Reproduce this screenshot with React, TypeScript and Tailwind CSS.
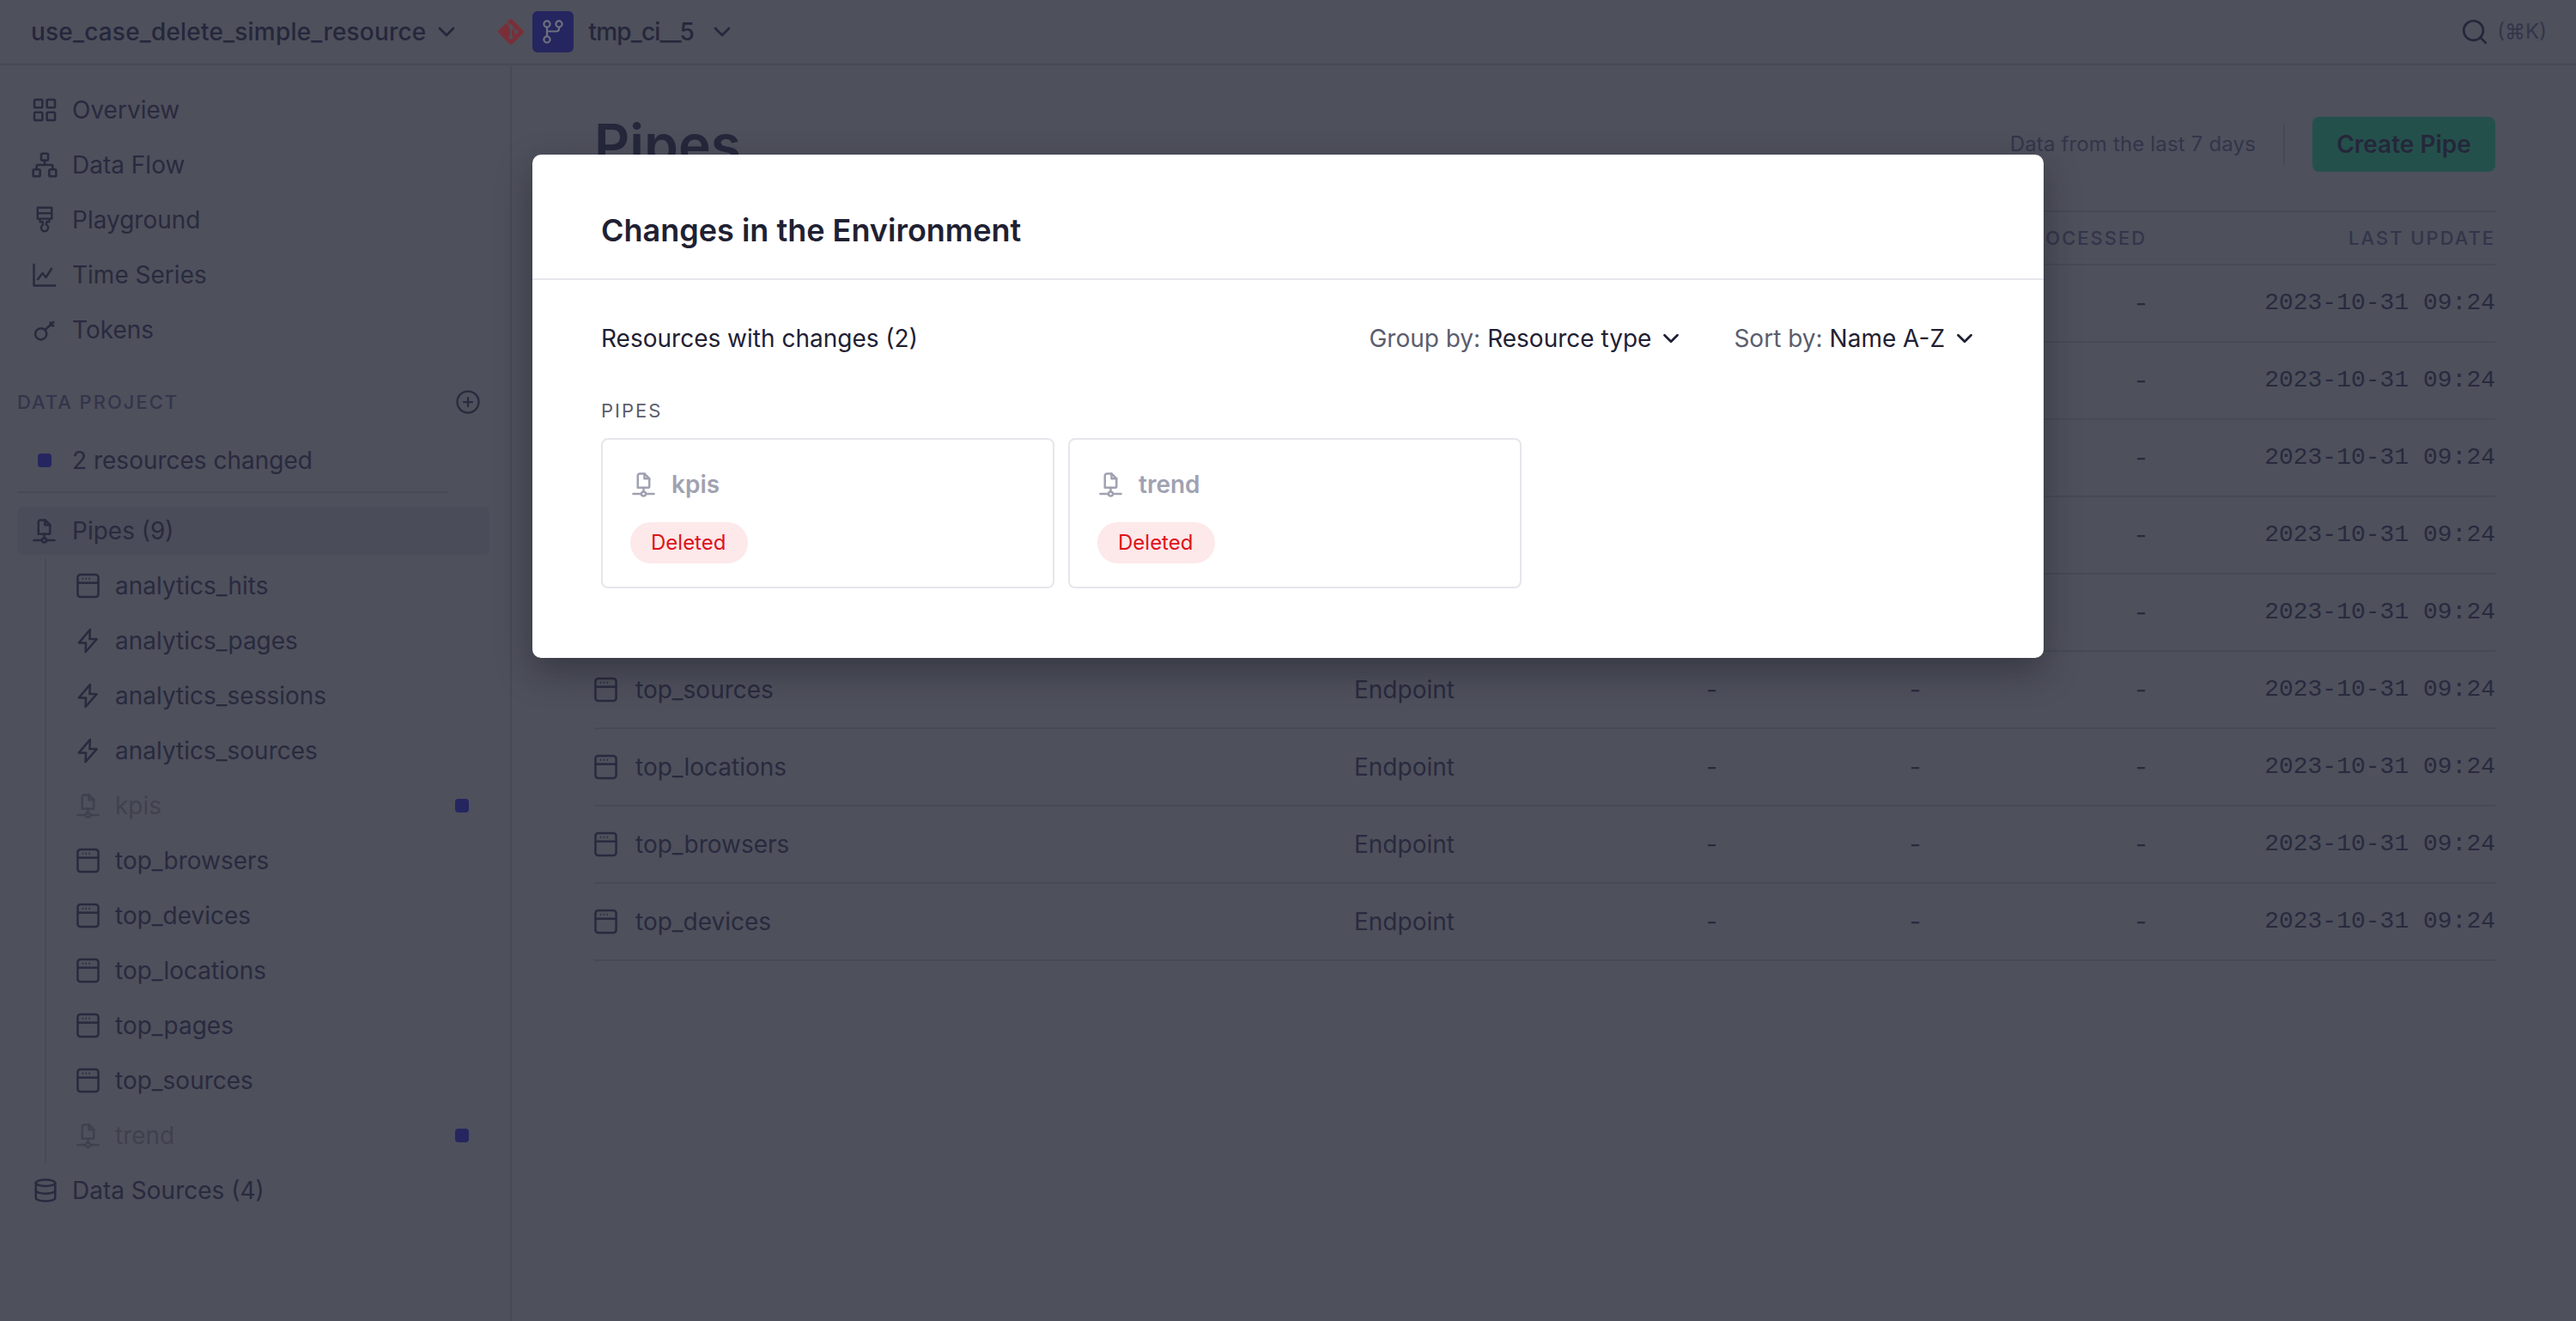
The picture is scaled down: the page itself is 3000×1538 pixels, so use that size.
import React from 'react';
import { ChevronDown, CirclePlus, Database, LayoutGrid, Network, Search } from 'lucide-react';
import { SiGit } from 'react-icons/si';

type IconProps = { className?: string };

function PipeIcon({ className = '' }: IconProps) {
  return (
    <svg viewBox="0 0 28 30" fill="none" stroke="currentColor" strokeWidth="2.6" strokeLinejoin="round" strokeLinecap="round" className={className}>
      <path d="M7 19V4.5A2.5 2.5 0 0 1 9.5 2H15l6 6v9a2 2 0 0 1-2 2H7z" />
      <path d="M15 2v6h6" />
      <path d="M14 19v5" />
      <path d="M1.5 26.5H10.8M17.2 26.5H26.5" />
      <circle cx="14" cy="26.5" r="2.6" />
    </svg>
  );
}

function NodeIcon({ className = '' }: IconProps) {
  return (
    <svg viewBox="0 0 28 30" fill="none" stroke="currentColor" strokeWidth="2.6" className={className}>
      <rect x="1.5" y="1.5" width="25" height="27" rx="3.5" />
      <path d="M1.5 11.5h25" />
      <path d="M7 6.5h1.4M11 6.5h1.4M15 6.5h1.4" strokeWidth="2" />
    </svg>
  );
}

function BoltIcon({ className = '' }: IconProps) {
  return (
    <svg viewBox="0 0 28 30" fill="none" stroke="currentColor" strokeWidth="2.6" strokeLinejoin="round" className={className}>
      <path d="M16.5 1.5 3 17.5h8.5l-.5 11 13.5-15.5H16z" />
    </svg>
  );
}

function BrushIcon({ className = '' }: IconProps) {
  return (
    <svg viewBox="0 0 24 34" fill="none" stroke="currentColor" strokeWidth="2.6" strokeLinejoin="round" className={className}>
      <path d="M3 1.5h18v14H3z" />
      <path d="M3 8.5h18" />
      <path d="M6 15.5v4h3.5l.5 3.5a4.5 4.5 0 1 0 4 0l.5-3.5H18v-4" />
    </svg>
  );
}

function ChartIcon({ className = '' }: IconProps) {
  return (
    <svg viewBox="0 0 28 28" fill="none" stroke="currentColor" strokeWidth="2.4" strokeLinejoin="round" className={className}>
      <path d="M1.5 1v25.5H27" />
      <path d="M5.5 20l6-8 4 5 7-11" />
    </svg>
  );
}

function KeyIcon({ className = '' }: IconProps) {
  return (
    <svg viewBox="0 0 28 28" fill="none" stroke="currentColor" strokeWidth="2.6" strokeLinejoin="round" className={className}>
      <circle cx="9" cy="18.5" r="6.8" />
      <path d="M14 13.5 25 3.5" />
      <path d="M20 8l1-4.5M20 8l5 .5" />
    </svg>
  );
}

function BranchIcon({ className = '' }: IconProps) {
  return (
    <svg viewBox="0 0 28 28" fill="none" stroke="currentColor" strokeWidth="2.2" className={className}>
      <circle cx="7" cy="5" r="3.6" />
      <circle cx="21" cy="5" r="3.6" />
      <circle cx="7" cy="23" r="3.6" />
      <path d="M7 8.6v10.8" />
      <path d="M21 8.6v1.9a3 3 0 0 1-3 3H7" />
    </svg>
  );
}

const mainNav = [
  { label: 'Overview', icon: <LayoutGrid className="w-[32px] h-[32px] -ml-[2px]" strokeWidth={1.9} /> },
  { label: 'Data Flow', icon: <Network className="w-[32px] h-[32px] -ml-[2px]" strokeWidth={1.9} /> },
  { label: 'Playground', icon: <BrushIcon className="w-[22px] h-[32px] ml-[3px]" /> },
  { label: 'Time Series', icon: <ChartIcon className="w-[28px] h-[28px]" /> },
  { label: 'Tokens', icon: <KeyIcon className="w-[27px] h-[27px] ml-[1px]" /> },
];

const pipes = [
  { name: 'analytics_hits', kind: 'node' },
  { name: 'analytics_pages', kind: 'bolt' },
  { name: 'analytics_sessions', kind: 'bolt' },
  { name: 'analytics_sources', kind: 'bolt' },
  { name: 'kpis', kind: 'deleted' },
  { name: 'top_browsers', kind: 'node' },
  { name: 'top_devices', kind: 'node' },
  { name: 'top_locations', kind: 'node' },
  { name: 'top_pages', kind: 'node' },
  { name: 'top_sources', kind: 'node' },
  { name: 'trend', kind: 'deleted' },
];

const tableRows = [
  'analytics_hits',
  'top_pages',
  'analytics_pages',
  'analytics_sessions',
  'analytics_sources',
  'top_sources',
  'top_locations',
  'top_browsers',
  'top_devices',
];

const columns = 'grid grid-cols-[885px_410px_237px_50px_226px_1fr] items-center';

function ResourceCard({ name }: { name: string }) {
  return (
    <div className="w-[528px] h-[175px] border-2 border-[#e6e6ec] rounded-lg pl-[32px] pt-[36px]">
      <div className="flex items-center h-[32px] text-[#a0a2b1]">
        <PipeIcon className="w-[27px] h-[30px] ml-[2px]" />
        <span className="ml-[19px] text-[28px] font-semibold leading-none">{name}</span>
      </div>
      <span className="mt-[28px] flex w-fit items-center h-[48px] pl-[24px] pr-[26px] rounded-full bg-[#fde8ea] text-[#df1219] text-[24px]">
        Deleted
      </span>
    </div>
  );
}

export default function App() {
  return (
    <div className="relative h-[1538px] w-[3000px] overflow-hidden bg-[#4e505c] text-[#292a3e] font-['Inter',sans-serif]">
      {/* Top bar */}
      <header className="flex items-center h-[76px] border-b-2 border-[#474955] pl-[36px] pr-[34px]">
        <span className="text-[28px] font-medium tracking-[0.2px] text-[#25273b]">use_case_delete_simple_resource</span>
        <ChevronDown className="ml-[8px] w-[32px] h-[32px] text-[#25273b]" strokeWidth={2} />
        <SiGit className="ml-[44px] w-[30px] h-[30px] text-[#7a2f38]" />
        <div className="ml-[10px] flex items-center justify-center w-[48px] h-[48px] rounded-md bg-[#25265f] text-[#6f7080]">
          <BranchIcon className="w-[28px] h-[28px]" />
        </div>
        <span className="ml-[17px] text-[28px] font-medium tracking-[-0.8px] text-[#25273b]">tmp_ci__5</span>
        <ChevronDown className="ml-[17px] w-[32px] h-[32px] text-[#25273b]" strokeWidth={2} />
        <div className="ml-auto flex items-center">
          <Search className="w-[34px] h-[34px] text-[#25273b]" strokeWidth={1.9} />
          <span className="ml-[9px] text-[24px] text-[#33354a]">(⌘K)</span>
        </div>
      </header>

      <div className="flex h-[1462px]">
        {/* Sidebar */}
        <aside className="w-[596px] shrink-0 border-r-2 border-[#474955] pt-[20px]">
          <nav className="flex flex-col">
            {mainNav.map((item) => (
              <div key={item.label} className="flex items-center h-[64px] pl-[38px] text-[28px]">
                <span className="w-[46px] flex items-center">{item.icon}</span>
                {item.label}
              </div>
            ))}
          </nav>

          <div className="mt-[34px] flex items-center justify-between h-[36px] pl-[20px] pr-[36px]">
            <span className="text-[22px] font-medium tracking-[0.09em] text-[#33354a]">DATA PROJECT</span>
            <CirclePlus className="w-[30px] h-[30px] -mr-[2px]" strokeWidth={1.8} />
          </div>

          <div className="mt-[14px] ml-[20px] w-[502px] h-[74px] border-b-2 border-[#474955] flex items-center pl-[24px] text-[28px]">
            <span className="w-[16px] h-[16px] rounded-[4px] bg-[#25265f] mr-[24px]" />
            2 resources changed
          </div>

          <div className="mt-[16px] mx-[20px] h-[56px] w-[550px] rounded-lg bg-[#4a4c59] flex items-center pl-[18px] text-[28px]">
            <PipeIcon className="w-[27px] h-[30px]" />
            <span className="ml-[19px]">Pipes (9)</span>
          </div>

          <div className="ml-[52px] mt-[4px] border-l-2 border-[#474955] w-[518px]">
            {pipes.map((pipe) => {
              const deleted = pipe.kind === 'deleted';
              return (
                <div
                  key={pipe.name}
                  className={`flex items-center h-[64px] pl-[35px] text-[28px] ${deleted ? 'text-[#3f414e]' : ''}`}
                >
                  <span className="w-[45px] flex items-center">
                    {pipe.kind === 'node' && <NodeIcon className="w-[27px] h-[30px]" />}
                    {pipe.kind === 'bolt' && <BoltIcon className="w-[27px] h-[30px]" />}
                    {deleted && <PipeIcon className="w-[27px] h-[30px]" />}
                  </span>
                  {pipe.name}
                  {deleted && <span className="ml-auto mr-[24px] w-[16px] h-[16px] rounded-[4px] bg-[#25265f]" />}
                </div>
              );
            })}
          </div>

          <div className="flex items-center h-[64px] pl-[38px] text-[28px]">
            <Database className="w-[30px] h-[30px] mr-[16px]" strokeWidth={2} />
            Data Sources (4)
          </div>
        </aside>

        {/* Main */}
        <main className="flex-1 pl-[96px] pr-[94px] pt-[60px]">
          <div className="flex items-center h-[64px]">
            <h1 className="text-[64px] font-semibold text-[#25273b] leading-none">Pipes</h1>
            <span className="ml-auto text-[24px] tracking-[0.16px] text-[#33354a]">Data from the last 7 days</span>
            <span className="mx-[32px] w-[2px] h-[48px] bg-[#474955]" />
            <button className="w-[213px] h-[64px] rounded-lg bg-[#24504c] text-[28px] font-semibold text-[#25273b]">
              Create Pipe
            </button>
          </div>

          <div className={`${columns} mt-[45px] h-[64px] border-y-2 border-[#474955] text-[22px] font-medium tracking-[0.09em] text-[#33354a]`}>
            <span>NAME</span>
            <span>TYPE</span>
            <span>REQUESTS</span>
            <span>ERRORS</span>
            <span className="text-right">PROCESSED</span>
            <span className="text-right">LAST UPDATE</span>
          </div>

          {tableRows.map((row) => (
            <div key={row} className={`${columns} h-[90px] border-b-2 border-[#474955] text-[28px]`}>
              <span className="flex items-center">
                <NodeIcon className="w-[27px] h-[30px] mr-[21px]" />
                {row}
              </span>
              <span>Endpoint</span>
              <span>-</span>
              <span>-</span>
              <span className="text-right">-</span>
              <span className="text-right font-['Liberation_Mono',monospace]">2023-10-31 09:24</span>
            </div>
          ))}
        </main>
      </div>

      {/* Modal */}
      <div className="absolute left-[620px] top-[180px] w-[1760px] h-[586px] rounded-[10px] bg-white text-[#1f2133] shadow-[0_16px_40px_rgba(20,20,30,0.4)]">
        <div className="flex items-center h-[146px] pl-[80px] pt-[32px] border-b-2 border-[#e6e6ec]">
          <h2 className="text-[36px] font-semibold">Changes in the Environment</h2>
        </div>
        <div className="px-[80px]">
          <div className="flex items-center h-[70px] mt-[33px] text-[28px]">
            <span>Resources with changes (2)</span>
            <span className="ml-auto text-[#5b5d6d]">Group by:</span>
            <span className="ml-[8px]">Resource type</span>
            <ChevronDown className="ml-[8px] w-[30px] h-[30px]" strokeWidth={2.2} />
            <span className="ml-[58px] text-[#5b5d6d]">Sort by:</span>
            <span className="ml-[8px]">Name A-Z</span>
            <ChevronDown className="ml-[8px] -mr-[3px] w-[30px] h-[30px]" strokeWidth={2.2} />
          </div>
          <div className="mt-[35px] text-[22px] tracking-[0.09em] text-[#5b5d6d] leading-[28px]">PIPES</div>
          <div className="mt-[18px] flex gap-[16px]">
            <ResourceCard name="kpis" />
            <ResourceCard name="trend" />
          </div>
        </div>
      </div>
    </div>
  );
}
